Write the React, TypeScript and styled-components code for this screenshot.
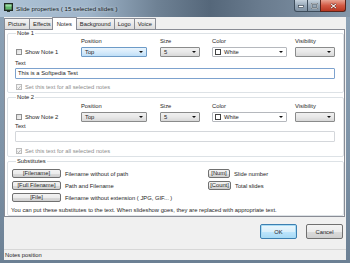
import React from "react";
import styled, { createGlobalStyle, css } from "styled-components";

const GlobalStyle = createGlobalStyle`
  html, body {
    margin: 0;
    padding: 0;
    width: 350px;
    height: 263px;
    overflow: hidden;
    background: #6f8396;
  }
  body {
    font-family: "Liberation Sans", Arial, sans-serif;
    font-size: 5.8px;
    color: #1e1e1e;
  }
`;

const SCWindow = styled.div`
  width: 350px;
  height: 263px;
  display: flex;
  flex-direction: column;
  background: linear-gradient(180deg, #8ea4b8 0%, #7d92a6 60%, #6c8094 100%);
`;

const SCTitleBar = styled.div`
  height: 17px;
  flex: none;
  display: flex;
  align-items: flex-start;
  padding-left: 4px;
  background: linear-gradient(
    90deg,
    #aec3d6 0%,
    #9fb5ca 25%,
    #6e8194 45%,
    #55677a 60%,
    #6a7c8f 75%,
    #8497aa 100%
  );
`;

const SCAppIcon = styled.svg`
  width: 9px;
  height: 9px;
  margin-top: 3px;
  flex: none;
`;

const SCTitle = styled.span`
  margin: 5px 0 0 3px;
  font-size: 6.2px;
  line-height: 7px;
  color: #101820;
  text-shadow: 0 0 3px rgba(255, 255, 255, 0.8);
  flex: 1;
`;

const SCCaptionButtons = styled.div`
  display: flex;
  margin-right: 4px;
`;

const SCCaptionButton = styled.div<{ $close?: boolean }>`
  height: 12px;
  width: ${(p) => (p.$close ? "26px" : "14px")};
  box-sizing: border-box;
  display: flex;
  align-items: center;
  justify-content: center;
  border: 1px solid #3d4c5b;
  border-top: none;
  margin-left: -1px;
  background: linear-gradient(180deg, #c6d2de 0%, #98a9b9 50%, #7f91a3 100%);
  ${(p) =>
    p.$close &&
    css`
      border-color: #5a231a;
      border-radius: 0 0 3px 0;
      background: linear-gradient(180deg, #e8a493 0%, #d35a44 50%, #b83620 100%);
    `}
  &:first-child {
    border-radius: 0 0 0 3px;
  }
`;

const SCFrame = styled.div`
  flex: 1;
  display: flex;
  padding: 0 4px 3px 4px;
  min-height: 0;
`;

const SCClient = styled.div`
  flex: 1;
  display: flex;
  flex-direction: column;
  background: #f0f0f0;
`;

const SCTabStrip = styled.div`
  height: 12px;
  display: flex;
  align-items: flex-end;
  position: relative;
  z-index: 1;
`;

const SCTab = styled.div<{ $active?: boolean }>`
  height: 11px;
  box-sizing: border-box;
  padding: 0 3px;
  line-height: 10px;
  border: 1px solid #898c95;
  border-bottom: none;
  margin-right: -1px;
  background: linear-gradient(180deg, #f4f4f4 0%, #e9e9e9 50%, #dcdcdc 100%);
  border-radius: 1px 1px 0 0;
  ${(p) =>
    p.$active &&
    css`
      height: 13px;
      margin: 0 -1px -1px -2px;
      padding: 0 4px;
      line-height: 12px;
      background: #fff;
      position: relative;
    `}
`;

const SCPanel = styled.div`
  background: #fff;
  border: 1px solid #898c95;
  margin-right: 1px;
  padding: 0 0 0 2px;
`;

const SCGroup = styled.fieldset`
  margin: 0;
  padding: 0 0 2px 7px;
  border: 1px solid #dde2e6;
  border-radius: 2px;
  min-inline-size: 0;
  & + & {
    margin-top: 1px;
  }
`;

const SCLegend = styled.legend`
  padding: 0 1px;
  margin-left: 1px;
  line-height: 7px;
`;

const SCControlGrid = styled.div<{ $top: number }>`
  display: grid;
  grid-template-columns: 66px 79px 52px 83px 40px;
  grid-template-rows: 6px 10px;
  row-gap: 3px;
  margin-top: ${(p) => p.$top}px;
  align-items: center;
`;

const SCSmallLabel = styled.div`
  line-height: 6px;
  white-space: nowrap;
`;

const SCCheckRow = styled.label<{ $disabled?: boolean }>`
  display: flex;
  align-items: center;
  gap: 3px;
  line-height: 6px;
  padding-left: 1px;
  white-space: nowrap;
  color: ${(p) => (p.$disabled ? "#8d8d8d" : "inherit")};
`;

const SCCheckBox = styled.span<{ $disabled?: boolean }>`
  width: 6px;
  height: 6px;
  box-sizing: border-box;
  flex: none;
  display: flex;
  align-items: center;
  justify-content: center;
  border: 1px solid ${(p) => (p.$disabled ? "#bcbcbc" : "#8f8f8f")};
  background: ${(p) =>
    p.$disabled ? "#f4f4f4" : "linear-gradient(135deg, #dcdcdc 0%, #f6f6f6 100%)"};
`;

const SCCombo = styled.div<{ $w: number; $variant: "hot" | "gray" | "white" }>`
  width: ${(p) => p.$w}px;
  height: 10px;
  box-sizing: border-box;
  display: flex;
  align-items: center;
  padding: 0 2px 0 3px;
  border-radius: 1px;
  border: 1px solid #8a8b8b;
  background: linear-gradient(180deg, #f0f0f0 0%, #e8e8e8 50%, #d8d8d8 100%);
  ${(p) =>
    p.$variant === "hot" &&
    css`
      border-color: #6d9bc7;
      background: linear-gradient(180deg, #e9f4fd 0%, #d7ebfb 50%, #bfdff7 100%);
    `}
  ${(p) =>
    p.$variant === "white" &&
    css`
      border-color: #b5b8bd;
      background: #fff;
      padding-left: 2px;
    `}
`;

const SCComboText = styled.span`
  flex: 1;
  line-height: 8px;
  white-space: nowrap;
`;

const SCArrow = styled.span`
  width: 0;
  height: 0;
  border-left: 2px solid transparent;
  border-right: 2px solid transparent;
  border-top: 2px solid #111;
  margin-right: 1px;
`;

const SCSwatch = styled.span`
  width: 6px;
  height: 6px;
  box-sizing: border-box;
  border: 1px solid #444;
  background: #fff;
  margin-right: 3px;
  flex: none;
`;

const SCTextLabel = styled.div<{ $top: number }>`
  line-height: 6px;
  margin-top: ${(p) => p.$top}px;
`;

const SCTextInput = styled.div<{ $focus?: boolean }>`
  width: 320px;
  height: 11px;
  box-sizing: border-box;
  margin-top: 2px;
  padding-left: 2px;
  line-height: 9px;
  border: 1px solid ${(p) => (p.$focus ? "#7da2ce" : "#d4d7db")};
  border-radius: 1px;
  background: #fff;
`;

const SCSetRow = styled.div<{ $top: number }>`
  margin-top: ${(p) => p.$top}px;
`;

const SCSubGrid = styled.div`
  display: grid;
  grid-template-columns: 196px auto;
  grid-auto-rows: 9px;
  row-gap: 3px;
  margin-top: 4px;
  margin-left: -3px;
`;

const SCSubItem = styled.div`
  display: flex;
  align-items: center;
  gap: 4px;
  white-space: nowrap;
`;

const SCSubButton = styled.div<{ $w: number }>`
  width: ${(p) => p.$w}px;
  height: 9px;
  box-sizing: border-box;
  flex: none;
  display: flex;
  align-items: center;
  justify-content: center;
  line-height: 7px;
  white-space: nowrap;
  border: 1px solid #707070;
  border-radius: 2px;
  background: linear-gradient(180deg, #f3f3f3 0%, #ececec 50%, #dbdbdb 51%, #cfcfcf 100%);
`;

const SCNote = styled.div`
  margin: 5px 0 0 -4px;
  line-height: 6px;
  white-space: nowrap;
`;

const SCButtonRow = styled.div`
  display: flex;
  justify-content: flex-end;
  gap: 9px;
  margin-top: 7px;
  padding-right: 3px;
`;

const SCDialogButton = styled.div<{ $default?: boolean }>`
  width: 37px;
  height: 15px;
  box-sizing: border-box;
  display: flex;
  align-items: center;
  justify-content: center;
  border: 1px solid #707070;
  border-radius: 2px;
  background: linear-gradient(180deg, #f3f3f3 0%, #ececec 50%, #dbdbdb 51%, #cfcfcf 100%);
  ${(p) =>
    p.$default &&
    css`
      border-color: #3c7fb1;
      box-shadow: inset 0 0 0 1px #a9dcf5;
      background: linear-gradient(180deg, #eaf6fd 0%, #d9effb 50%, #bee6fd 51%, #a7d9f5 100%);
    `}
`;

const SCStatusBar = styled.div`
  margin-top: auto;
  height: 11px;
  box-sizing: border-box;
  border-top: 1px solid #d7d7d7;
  padding-left: 1px;
  line-height: 10px;
`;

const CheckMark = ({ color }: { color: string }) => (
  <svg width="5" height="5" viewBox="0 0 5 5">
    <path d="M0.7 2.6 L2 3.9 L4.4 0.9" fill="none" stroke={color} strokeWidth="0.9" />
  </svg>
);

type ComboProps = { w: number; variant: "hot" | "gray" | "white"; text?: string; swatch?: boolean };

const Combo = ({ w, variant, text, swatch }: ComboProps) => (
  <SCCombo $w={w} $variant={variant}>
    {swatch && <SCSwatch />}
    <SCComboText>{text}</SCComboText>
    <SCArrow />
  </SCCombo>
);

const NoteGroup = ({ n, gridTop, textTop, setTop, hot, value }: {
  n: number;
  gridTop: number;
  textTop: number;
  setTop: number;
  hot?: boolean;
  value?: string;
}) => (
  <SCGroup>
    <SCLegend>Note {n}</SCLegend>
    <SCControlGrid $top={gridTop}>
      <span />
      <SCSmallLabel>Position</SCSmallLabel>
      <SCSmallLabel>Size</SCSmallLabel>
      <SCSmallLabel>Color</SCSmallLabel>
      <SCSmallLabel>Visibility</SCSmallLabel>
      <SCCheckRow>
        <SCCheckBox />
        Show Note {n}
      </SCCheckRow>
      <Combo w={66} variant={hot ? "hot" : "gray"} text="Top" />
      <Combo w={40} variant="gray" text="5" />
      <Combo w={75} variant="white" text="White" swatch />
      <Combo w={40} variant="gray" />
    </SCControlGrid>
    <SCTextLabel $top={textTop}>Text</SCTextLabel>
    <SCTextInput $focus={hot}>{value}</SCTextInput>
    <SCSetRow $top={setTop}>
      <SCCheckRow $disabled>
        <SCCheckBox $disabled>
          <CheckMark color="#9a9a9a" />
        </SCCheckBox>
        Set this text for all selected notes
      </SCCheckRow>
    </SCSetRow>
  </SCGroup>
);

export default function App() {
  return (
    <>
      <GlobalStyle />
      <SCWindow>
        <SCTitleBar>
          <SCAppIcon viewBox="0 0 9 9">
            <rect x="0.5" y="0.5" width="8" height="7" fill="#3a4a3a" stroke="#1e2a22" />
            <rect x="1.5" y="1.5" width="6" height="5" fill="#5fb86a" />
            <rect x="1.5" y="1.5" width="6" height="2" fill="#9ad9a3" />
            <rect x="3" y="8" width="3" height="1" fill="#2a3a30" />
          </SCAppIcon>
          <SCTitle>Slide properties ( 15 selected slides )</SCTitle>
          <SCCaptionButtons>
            <SCCaptionButton>
              <svg width="6" height="4" viewBox="0 0 6 4">
                <rect x="0.5" y="1.5" width="5" height="2" fill="#fff" stroke="#2e3a46" strokeWidth="0.6" />
              </svg>
            </SCCaptionButton>
            <SCCaptionButton>
              <svg width="7" height="6" viewBox="0 0 7 6">
                <rect x="0.8" y="0.8" width="5.4" height="4.4" fill="none" stroke="#2e3a46" strokeWidth="1.4" />
                <rect x="0.8" y="0.8" width="5.4" height="4.4" fill="none" stroke="#fff" strokeWidth="0.7" />
              </svg>
            </SCCaptionButton>
            <SCCaptionButton $close>
              <svg width="7" height="6" viewBox="0 0 7 6">
                <path d="M1 0.8 L6 5.2 M6 0.8 L1 5.2" stroke="#5a1a10" strokeWidth="2" />
                <path d="M1 0.8 L6 5.2 M6 0.8 L1 5.2" stroke="#fff" strokeWidth="1.1" />
              </svg>
            </SCCaptionButton>
          </SCCaptionButtons>
        </SCTitleBar>
        <SCFrame>
          <SCClient>
            <SCTabStrip>
              <SCTab>Picture</SCTab>
              <SCTab>Effects</SCTab>
              <SCTab $active>Notes</SCTab>
              <SCTab>Background</SCTab>
              <SCTab>Logo</SCTab>
              <SCTab>Voice</SCTab>
            </SCTabStrip>
            <SCPanel>
              <NoteGroup n={1} gridTop={1} textTop={3} setTop={5} hot value="This is a Softpedia Test" />
              <NoteGroup n={2} gridTop={2} textTop={1} setTop={6} />
              <SCGroup>
                <SCLegend>Substitutes</SCLegend>
                <SCSubGrid>
                  <SCSubItem>
                    <SCSubButton $w={49}>[Filename]</SCSubButton>
                    Filename without of path
                  </SCSubItem>
                  <SCSubItem>
                    <SCSubButton $w={22}>[Num]</SCSubButton>
                    Slide number
                  </SCSubItem>
                  <SCSubItem>
                    <SCSubButton $w={49}>[Full Filename]</SCSubButton>
                    Path and Filename
                  </SCSubItem>
                  <SCSubItem>
                    <SCSubButton $w={23}>[Count]</SCSubButton>
                    Total slides
                  </SCSubItem>
                  <SCSubItem>
                    <SCSubButton $w={49}>[File]</SCSubButton>
                    Filename without extension ( JPG, GIF... )
                  </SCSubItem>
                </SCSubGrid>
                <SCNote>
                  You can put these substitutes to the text. When slideshow goes, they are replaced with appropriate text.
                </SCNote>
              </SCGroup>
            </SCPanel>
            <SCButtonRow>
              <SCDialogButton $default>OK</SCDialogButton>
              <SCDialogButton>Cancel</SCDialogButton>
            </SCButtonRow>
            <SCStatusBar>Notes position</SCStatusBar>
          </SCClient>
        </SCFrame>
      </SCWindow>
    </>
  );
}
